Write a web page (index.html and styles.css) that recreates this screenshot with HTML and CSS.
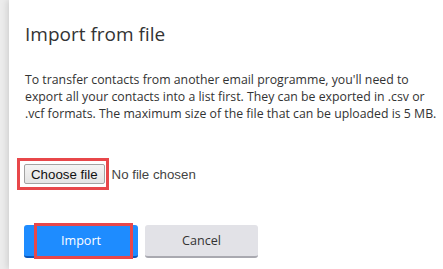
FILE: index.html
```html
<!DOCTYPE html>
<html lang="en">
<head>
    <meta charset="UTF-8">
    <meta name="viewport" content="width=device-width, initial-scale=1.0">
    <title>Import from file</title>
    <link rel="stylesheet" href="styles.css">
</head>
<body>
    <div class="dialog">
        <h2 class="dialog-title">Import from file</h2>
        <p class="dialog-text">To transfer contacts from another email programme, you'll need to export all your contacts into a list first. They can be exported in .csv or .vcf formats. The maximum size of the file that can be uploaded is 5 MB.</p>

        <!-- Seleção do arquivo -->
        <div class="file-row">
            <span class="mark-box">
                <button type="button" class="file-btn">Choose file</button>
            </span>
            <span class="file-name">No file chosen</span>
        </div>

        <div class="actions">
            <button type="button" class="btn btn-primary">
                Import
                <span class="mark-over"></span>
            </button>
            <button type="button" class="btn btn-secondary">Cancel</button>
        </div>
    </div>
</body>
</html>
```

FILE: styles.css
```css
body {
    font-family: "Open Sans", "Noto Sans", sans-serif;
    background-color: #ececec;
    color: #333;
    margin: 0;
    padding: 0;
    height: 269px;
    overflow: hidden;
}

.dialog {
    box-sizing: border-box;
    margin-left: 9px;
    height: 269px;
    padding: 0 0 0 16px;
    background-color: #fff;
    box-shadow: -2px 0 6px rgba(0, 0, 0, 0.12);
}

.dialog-title {
    margin: 0;
    padding-top: 22px;
    font-size: 19px;
    font-weight: 400;
    line-height: 24px;
    color: #333;
}

.dialog-text {
    max-width: 418px;
    margin: 25px 0 0;
    font-size: 12.3px;
    line-height: 17px;
    color: #333;
}

.file-row {
    display: flex;
    align-items: center;
    margin-top: 36px;
    margin-left: -8px;
}

.mark-box {
    display: inline-flex;
    padding: 3px 1px 3px 4px;
    border: 3px solid #e8474a;
}

.file-btn {
    height: 20px;
    padding: 0 6px;
    font-family: "Liberation Sans", Arial, sans-serif;
    font-size: 13.3px;
    color: #111;
    background: linear-gradient(#f4f4f4, #e4e4e4);
    border: 1px solid #a3a3a3;
    border-radius: 2px;
}

.file-name {
    margin-left: 3px;
    font-family: "Liberation Sans", Arial, sans-serif;
    font-size: 13.3px;
    color: #444;
}

.actions {
    display: flex;
    gap: 7px;
    margin-top: 35px;
    margin-left: -1px;
}

.btn {
    height: 33px;
    border: none;
    border-radius: 3px;
    font-family: "Open Sans", "Noto Sans", sans-serif;
    font-size: 12.6px;
    cursor: pointer;
}

.btn-primary {
    position: relative;
    width: 114px;
    background-color: #1e8cff;
    border-bottom: 2px solid #0b56b8;
    color: #fff;
}

.btn-secondary {
    width: 113px;
    background-color: #e2e2e7;
    border-bottom: 2px solid #a9a9b0;
    color: #333;
}

.mark-over {
    position: absolute;
    left: 10px;
    right: 5px;
    top: -2px;
    bottom: -3px;
    border: 3px solid #e8474a;
}
```
